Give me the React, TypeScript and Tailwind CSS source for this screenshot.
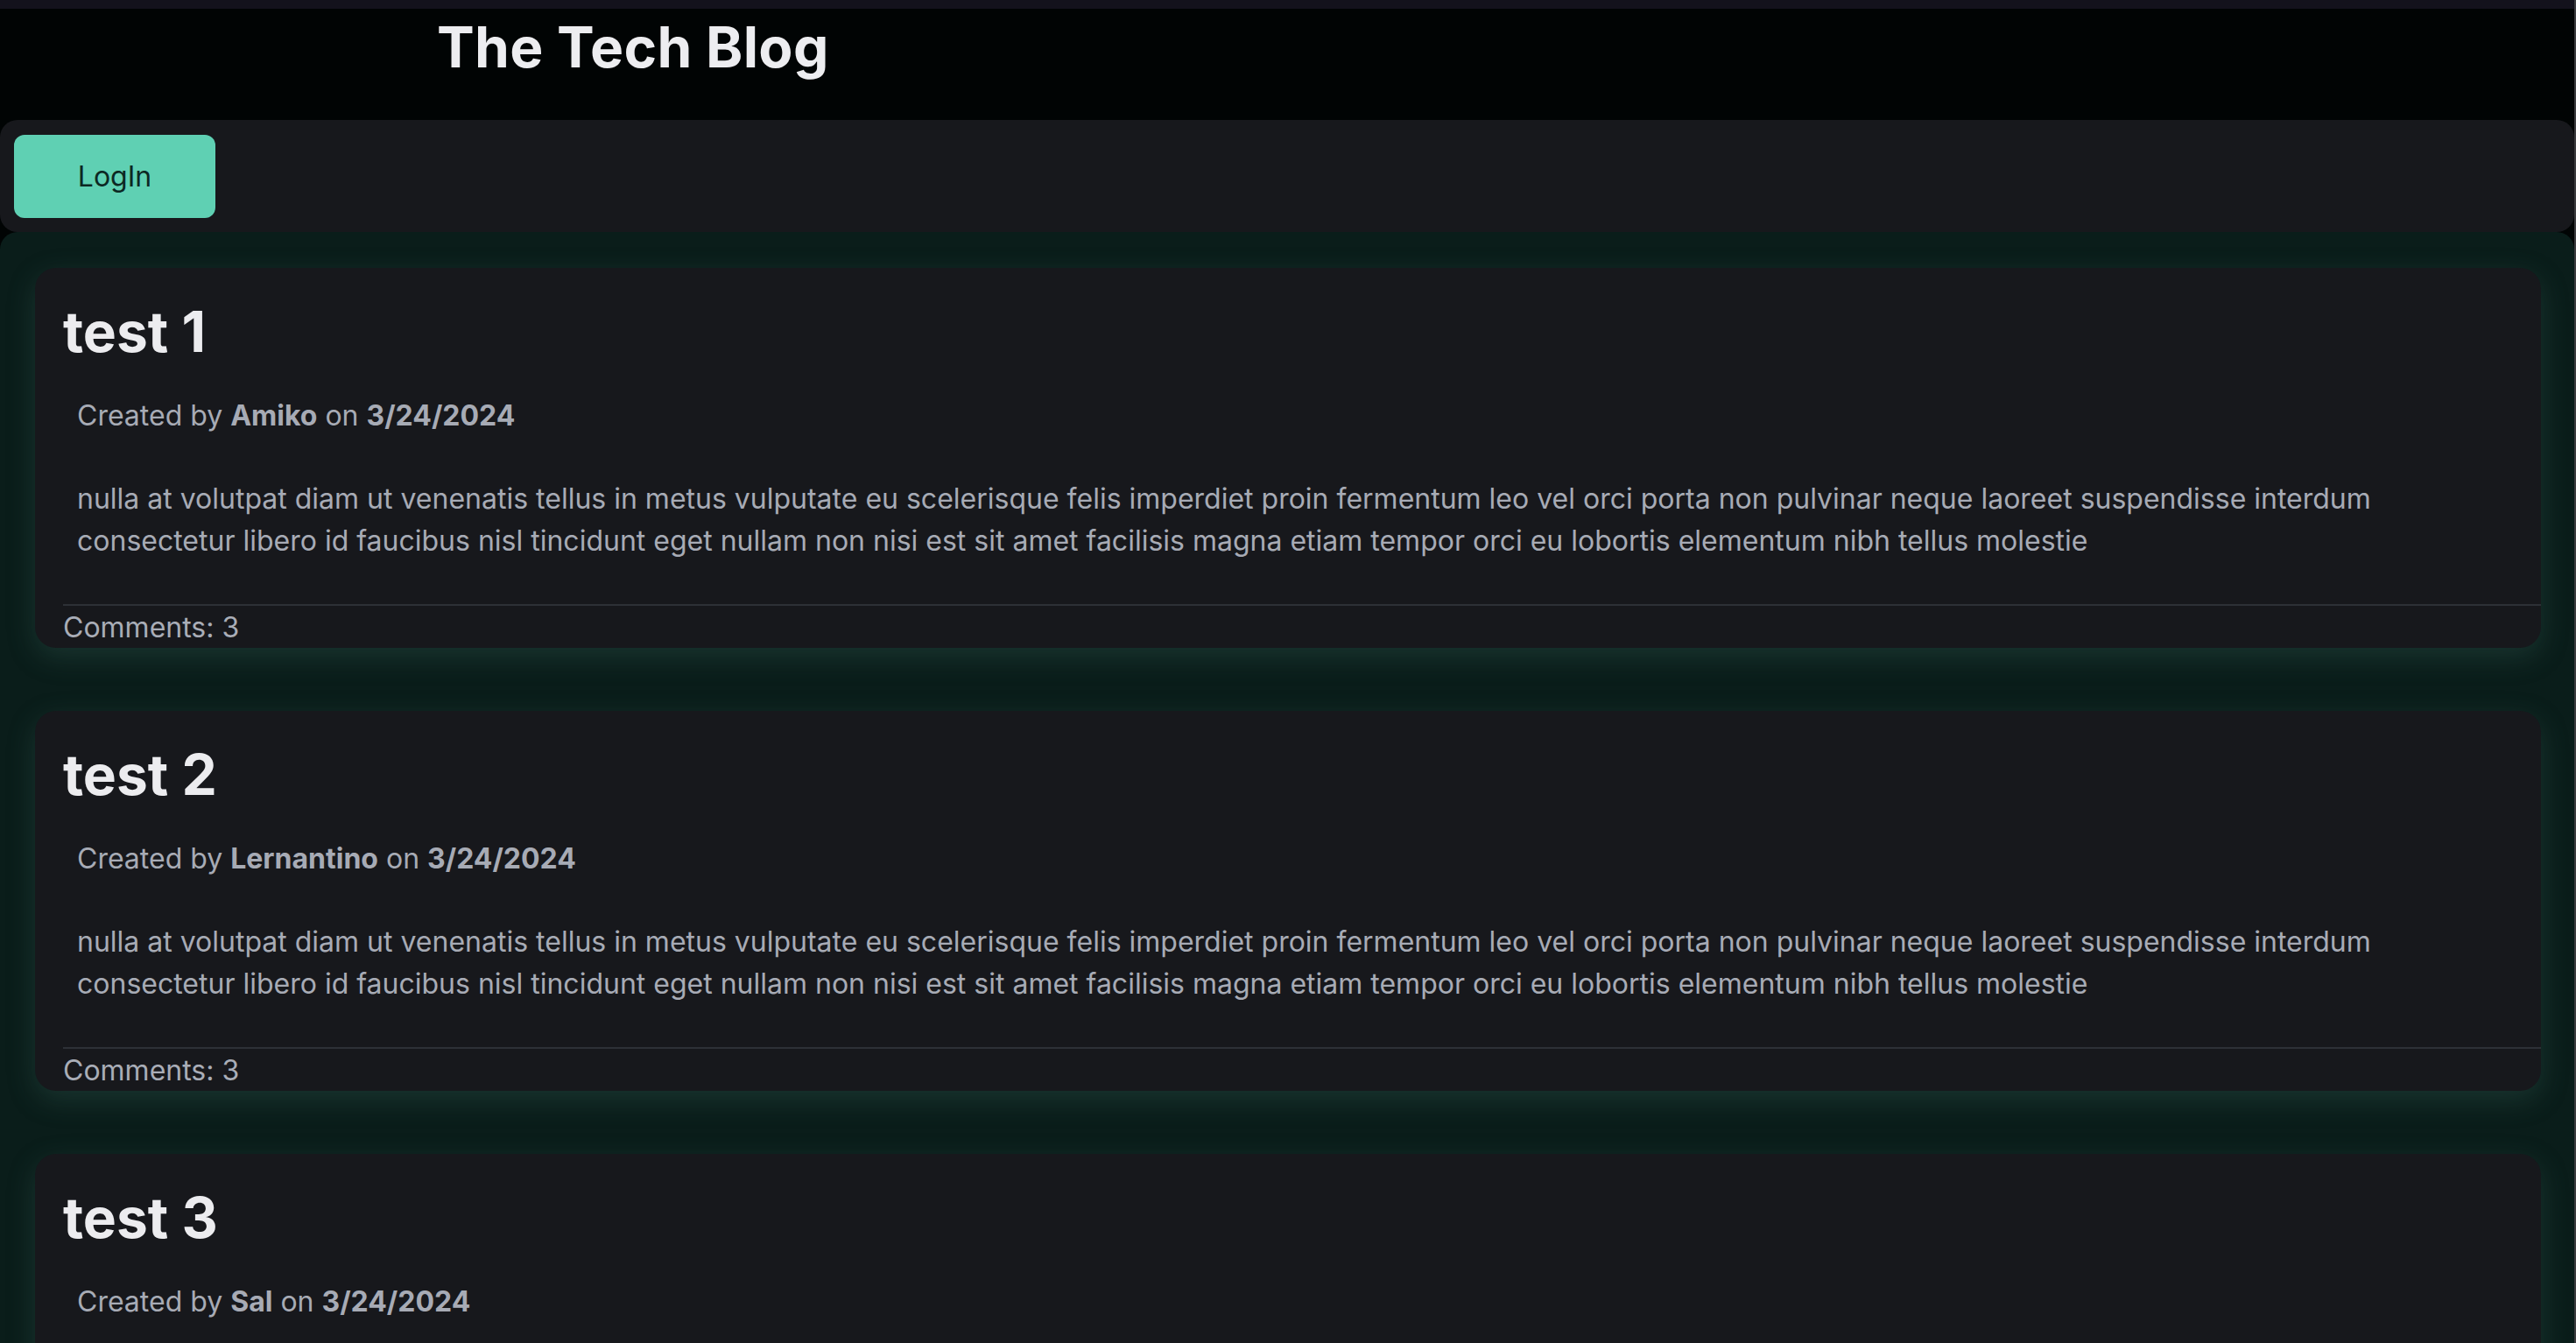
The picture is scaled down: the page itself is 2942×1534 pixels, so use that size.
import React from "react";

const BODY =
  "nulla at volutpat diam ut venenatis tellus in metus vulputate eu scelerisque felis imperdiet proin fermentum leo vel orci porta non pulvinar neque laoreet suspendisse interdum consectetur libero id faucibus nisl tincidunt eget nullam non nisi est sit amet facilisis magna etiam tempor orci eu lobortis elementum nibh tellus molestie";

const posts = [
  { title: "test 1", author: "Amiko", date: "3/24/2024", comments: 3 },
  { title: "test 2", author: "Lernantino", date: "3/24/2024", comments: 3 },
  { title: "test 3", author: "Sal", date: "3/24/2024", comments: 3 },
];

function PostCard({ p }: { p: (typeof posts)[number] }) {
  return (
    <div className="rounded-[24px] bg-[#17181c] pl-8 pt-[25px] shadow-[0_10px_32px_rgba(60,104,92,0.32)] overflow-hidden shrink-0">
      <h2 className="text-[64px] font-bold leading-[96px] text-[#ececef]">{p.title}</h2>
      <p className="mt-[24px] pl-4 text-[32px] leading-[48px] text-[#a7abb5]">
        Created by <span className="font-bold">{p.author}</span> on{" "}
        <span className="font-bold">{p.date}</span>
      </p>
      <p className="mt-[47px] pl-4 pr-[150px] text-[32px] leading-[48px] text-[#a7abb5]">{BODY}</p>
      <div className="mt-[48px] border-t-2 border-[#2d3036] pt-[2px] text-[32px] leading-[46px] text-[#a9adb7]">
        Comments: {p.comments}
      </div>
    </div>
  );
}

export default function App() {
  return (
    <div
      className="flex h-screen overflow-hidden bg-[#010404]"
      style={{ fontFamily: "Inter, 'Noto Sans', sans-serif" }}
    >
      <div className="flex min-w-0 flex-1 flex-col">
        <div className="h-[10px] shrink-0 bg-[#13121c]" />
        <header className="h-[127px] shrink-0 bg-[#010404] pl-[499px] pt-[12px]">
          <h1 className="text-[64px] font-bold leading-none tracking-[0.3px] text-[#ededf0]">The Tech Blog</h1>
        </header>
        <nav className="h-[128px] shrink-0 rounded-[20px] bg-[#17181c] px-4 pt-[17px]">
          <button className="h-[95px] w-[230px] rounded-[12px] bg-[#5fd0b3] text-[32px] leading-none text-[#0c2823]">
            LogIn
          </button>
        </nav>
        <main className="flex flex-1 flex-col gap-[72px] rounded-t-[20px] bg-[#0a1d1a] pl-[40px] pr-[38px] pt-[41px]">
          {posts.map((p) => (
            <PostCard key={p.title} p={p} />
          ))}
        </main>
      </div>
      <div className="w-[2px] shrink-0 bg-[#3c3c3f]" />
    </div>
  );
}
